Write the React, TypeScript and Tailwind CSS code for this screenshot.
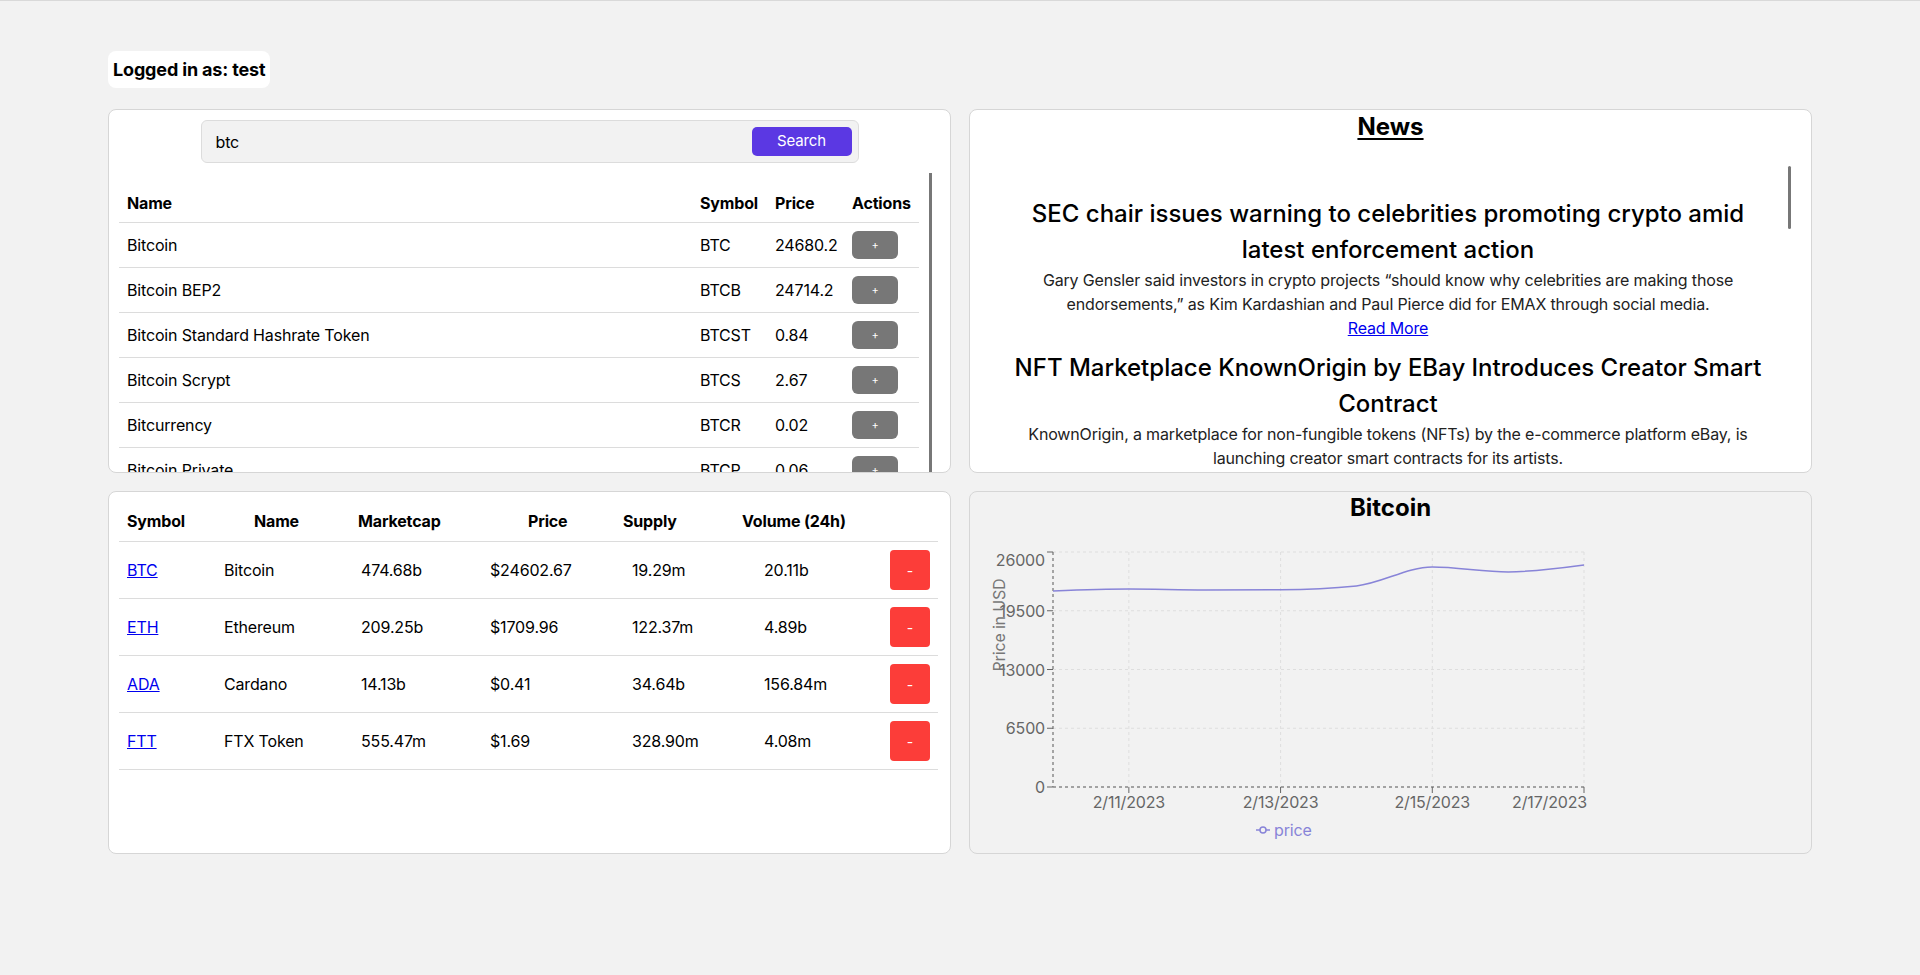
import React from "react";

const searchResults = [
  { name: "Bitcoin", symbol: "BTC", price: "24680.2" },
  { name: "Bitcoin BEP2", symbol: "BTCB", price: "24714.2" },
  { name: "Bitcoin Standard Hashrate Token", symbol: "BTCST", price: "0.84" },
  { name: "Bitcoin Scrypt", symbol: "BTCS", price: "2.67" },
  { name: "Bitcurrency", symbol: "BTCR", price: "0.02" },
  { name: "Bitcoin Private", symbol: "BTCP", price: "0.06" },
  { name: "Bitcoin Cash", symbol: "BCH", price: "131.4" },
];

const watchlist = [
  { symbol: "BTC", name: "Bitcoin", cap: "474.68b", price: "$24602.67", supply: "19.29m", volume: "20.11b" },
  { symbol: "ETH", name: "Ethereum", cap: "209.25b", price: "$1709.96", supply: "122.37m", volume: "4.89b" },
  { symbol: "ADA", name: "Cardano", cap: "14.13b", price: "$0.41", supply: "34.64b", volume: "156.84m" },
  { symbol: "FTT", name: "FTX Token", cap: "555.47m", price: "$1.69", supply: "328.90m", volume: "4.08m" },
];

// daily closes 2/10 .. 2/17
const prices = [21680, 21900, 21800, 21830, 22250, 24350, 23800, 24560];

const PLOT_LEFT = 73;
const PLOT_RIGHT = 604;
const PLOT_TOP = 22;
const PLOT_BOTTOM = 257;
const Y_MAX = 26000;

function px(i: number) {
  return PLOT_LEFT + (i * (PLOT_RIGHT - PLOT_LEFT)) / (prices.length - 1);
}
function py(v: number) {
  return PLOT_BOTTOM - (v / Y_MAX) * (PLOT_BOTTOM - PLOT_TOP);
}

// Same as d3 curveMonotoneX.
function monotonePath(pts: [number, number][]) {
  const n = pts.length;
  const sign = (v: number) => (v < 0 ? -1 : 1);
  const t: number[] = new Array(n).fill(0);
  for (let i = 1; i < n - 1; i++) {
    const [x0, y0] = pts[i - 1];
    const [x1, y1] = pts[i];
    const [x2, y2] = pts[i + 1];
    const h0 = x1 - x0;
    const h1 = x2 - x1;
    const s0 = (y1 - y0) / h0;
    const s1 = (y2 - y1) / h1;
    const p = (s0 * h1 + s1 * h0) / (h0 + h1);
    t[i] = (sign(s0) + sign(s1)) * Math.min(Math.abs(s0), Math.abs(s1), 0.5 * Math.abs(p)) || 0;
  }
  const h0 = pts[1][0] - pts[0][0];
  t[0] = ((3 * (pts[1][1] - pts[0][1])) / h0 - t[1]) / 2;
  const hl = pts[n - 1][0] - pts[n - 2][0];
  t[n - 1] = ((3 * (pts[n - 1][1] - pts[n - 2][1])) / hl - t[n - 2]) / 2;
  let d = `M${pts[0][0]},${pts[0][1]}`;
  for (let i = 0; i < n - 1; i++) {
    const [x0, y0] = pts[i];
    const [x1, y1] = pts[i + 1];
    const dx = (x1 - x0) / 3;
    d += ` C${x0 + dx},${y0 + dx * t[i]} ${x1 - dx},${y1 - dx * t[i + 1]} ${x1},${y1}`;
  }
  return d;
}

function PriceChart() {
  const yTicks = [0, 6500, 13000, 19500, 26000];
  const xTicks = [
    { i: 1, label: "2/11/2023" },
    { i: 3, label: "2/13/2023" },
    { i: 5, label: "2/15/2023" },
    { i: 7, label: "2/17/2023" },
  ];
  const path = monotonePath(prices.map((v, i) => [px(i), py(v)]));

  return (
    <svg width="640" height="320" viewBox="0 0 640 320" className="text-[16px]">
      {yTicks.map((v) => (
        <line key={v} x1={PLOT_LEFT} x2={PLOT_RIGHT} y1={py(v)} y2={py(v)} stroke="#dedede" strokeDasharray="3 3" />
      ))}
      {xTicks.map((t) => (
        <line key={t.i} x1={px(t.i)} x2={px(t.i)} y1={PLOT_TOP} y2={PLOT_BOTTOM} stroke="#dedede" strokeDasharray="3 3" />
      ))}

      {/* axes */}
      <line x1={PLOT_LEFT} x2={PLOT_LEFT} y1={PLOT_TOP} y2={PLOT_BOTTOM} stroke="#8a8a8a" strokeWidth="1.5" strokeDasharray="3 3" />
      <line x1={PLOT_LEFT} x2={PLOT_RIGHT} y1={PLOT_BOTTOM} y2={PLOT_BOTTOM} stroke="#8a8a8a" strokeWidth="1.5" strokeDasharray="3 3" />

      {yTicks.map((v) => (
        <g key={v}>
          <line x1={PLOT_LEFT - 6} x2={PLOT_LEFT} y1={py(v)} y2={py(v)} stroke="#666" />
          <text
            x={PLOT_LEFT - 8}
            y={v === Y_MAX ? py(v) + 8 : py(v)}
            textAnchor="end"
            dominantBaseline="central"
            fill="#666"
          >
            {v}
          </text>
        </g>
      ))}
      {xTicks.map((t) => (
        <g key={t.i}>
          <line x1={px(t.i)} x2={px(t.i)} y1={PLOT_BOTTOM} y2={PLOT_BOTTOM + 6} stroke="#666" />
          <text
            x={t.i === 7 ? px(t.i) + 3 : px(t.i)}
            y={PLOT_BOTTOM + 15}
            textAnchor={t.i === 7 ? "end" : "middle"}
            dominantBaseline="central"
            fill="#666"
          >
            {t.label}
          </text>
        </g>
      ))}

      <text
        x="19"
        y="95"
        transform="rotate(-90 19 95)"
        textAnchor="middle"
        dominantBaseline="central"
        fill="#777"
      >
        Price in USD
      </text>

      <path d={path} fill="none" stroke="#8884d8" strokeWidth="1.5" />

      {/* legend */}
      <line x1="276" x2="290" y1="300" y2="300" stroke="#8884d8" strokeWidth="1.5" />
      <circle cx="283" cy="300" r="3" fill="#f2f2f2" stroke="#8884d8" strokeWidth="1.5" />
      <text x="294" y="300" dominantBaseline="central" fill="#8884d8">
        price
      </text>
    </svg>
  );
}

function SearchPanel() {
  return (
    <div className="flex flex-col overflow-hidden rounded-lg border border-[#d6d6d6] bg-white px-[10px] pt-[10px]">
      <div className="mx-auto flex h-[43px] w-[658px] items-center justify-between rounded-md border border-[#dcdcdc] bg-[#f2f2f2] pl-[14px] pr-[6px]">
        <span className="text-[16px]">btc</span>
        <button className="h-[29px] w-[100px] rounded-[5px] bg-[#5b38e3] text-[15px] text-white">Search</button>
      </div>
      <div className="mt-[10px] flex min-h-0 flex-1">
        <div className="w-[800px] overflow-hidden pt-[10px]">
          <div className="flex h-[40px] items-center border-b border-[#dcdcdc] text-[16px] font-bold">
            <div className="flex-1 pl-2">Name</div>
            <div className="w-[75px] pl-2">Symbol</div>
            <div className="w-[77px] pl-2">Price</div>
            <div className="w-[75px] pl-2">Actions</div>
          </div>
          {searchResults.map((r) => (
            <div key={r.symbol} className="flex h-[45px] items-center border-b border-[#dcdcdc] text-[16px]">
              <div className="flex-1 pl-2">{r.name}</div>
              <div className="w-[75px] pl-2">{r.symbol}</div>
              <div className="w-[77px] pl-2">{r.price}</div>
              <div className="w-[75px] pl-2">
                <button className="h-[28px] w-[46px] rounded-md bg-[#777777] text-[11px] text-white">+</button>
              </div>
            </div>
          ))}
        </div>
        <div className="ml-[10px] w-[3px] bg-[#777777]" />
      </div>
    </div>
  );
}

function NewsPanel() {
  return (
    <div className="flex flex-col overflow-hidden rounded-lg border border-[#d6d6d6] bg-white">
      <h2 className="text-center text-[24px] font-bold leading-[34px] tracking-normal underline underline-offset-[3px]">
        News
      </h2>
      <div className="mt-[22px] flex min-h-0 flex-1 pl-[28px]">
        <div className="w-[780px] overflow-hidden pt-[30px] text-center">
          <h3 className="text-[24px] font-medium leading-[36px] tracking-normal">
            SEC chair issues warning to celebrities promoting crypto amid
            <br />
            latest enforcement action
          </h3>
          <p className="text-[16px] leading-[24px] text-[#222]">
            Gary Gensler said investors in crypto projects “should know why celebrities are making those
            <br />
            endorsements,” as Kim Kardashian and Paul Pierce did for EMAX through social media.
          </p>
          <a href="#" className="text-[16px] leading-[24px] text-[#0000ee] underline">
            Read More
          </a>
          <h3 className="mt-[10px] text-[24px] font-medium leading-[36px] tracking-normal">
            NFT Marketplace KnownOrigin by EBay Introduces Creator Smart
            <br />
            Contract
          </h3>
          <p className="text-[16px] leading-[24px] text-[#222]">
            KnownOrigin, a marketplace for non-fungible tokens (NFTs) by the e-commerce platform eBay, is
            <br />
            launching creator smart contracts for its artists.
          </p>
        </div>
        <div className="ml-[10px] h-[63px] w-[3px] rounded-full bg-[#777777]" />
      </div>
    </div>
  );
}

function WatchlistPanel() {
  return (
    <div className="overflow-hidden rounded-lg border border-[#d6d6d6] bg-white px-[10px] pt-[9px]">
      <div className="w-[819px]">
        <div className="flex h-[41px] items-center border-b border-[#dcdcdc] pl-[8px] text-[16px] font-bold">
          <div className="w-[127px]">Symbol</div>
          <div className="w-[104px]">Name</div>
          <div className="w-[170px]">Marketcap</div>
          <div className="w-[95px]">Price</div>
          <div className="w-[119px]">Supply</div>
          <div className="flex-1">Volume (24h)</div>
        </div>
        {watchlist.map((c) => (
          <div key={c.symbol} className="flex h-[57px] items-center border-b border-[#dcdcdc] pl-[8px] text-[16px]">
            <div className="w-[97px]">
              <a href="#" className="text-[#0000ee] underline">
                {c.symbol}
              </a>
            </div>
            <div className="w-[137px]">{c.name}</div>
            <div className="w-[129px]">{c.cap}</div>
            <div className="w-[142px]">{c.price}</div>
            <div className="w-[132px]">{c.supply}</div>
            <div className="w-[126px]">{c.volume}</div>
            <button className="h-[40px] w-[40px] rounded-[4px] bg-[#fc3d39] text-[14px] text-white">-</button>
          </div>
        ))}
      </div>
    </div>
  );
}

function ChartPanel() {
  return (
    <div className="overflow-hidden rounded-lg border border-[#d6d6d6] bg-[#f2f2f2]">
      <h2 className="text-center text-[24px] font-bold leading-[32px] tracking-normal">Bitcoin</h2>
      <div className="mt-[6px] pl-[10px]">
        <PriceChart />
      </div>
    </div>
  );
}

export default function App() {
  return (
    <div className="min-h-screen border-t border-[#d9d9d9] bg-[#f2f2f2] font-['Inter',sans-serif] tracking-[-0.01em] text-black">
      <div className="mx-auto w-[1704px] pt-[50px]">
        <div className="inline-flex h-[37px] items-center rounded-lg bg-white px-[5px] text-[18px] font-bold">
          Logged in as: test
        </div>
        <div className="mt-[21px] grid grid-cols-2 grid-rows-[364px_363px] gap-[18px]">
          <SearchPanel />
          <NewsPanel />
          <WatchlistPanel />
          <ChartPanel />
        </div>
      </div>
    </div>
  );
}
